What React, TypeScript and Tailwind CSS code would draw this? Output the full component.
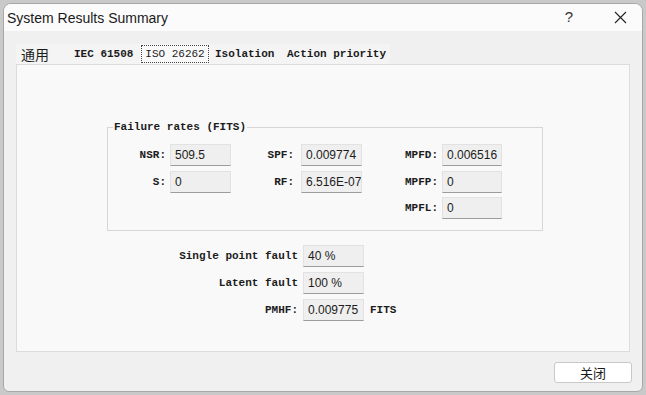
import React from 'react';

const mono = "font-['Liberation_Mono',monospace] text-[11px] font-bold text-[#1c1c1c] whitespace-nowrap";
const valFont = "font-['Liberation_Sans',Arial,sans-serif] text-[12px] text-[#1c1c1c]";

function Field({ value, w = 61 }: { value: string; w?: number }) {
  return (
    <div
      className={`h-[22px] flex items-center pl-[4px] bg-[#efefef] border border-[#e2e2e2] border-b-[#9c9c9c] whitespace-nowrap overflow-hidden ${valFont}`}
      style={{ width: w }}
    >
      {value}
    </div>
  );
}

function Row({ label, labelW, gap, value, w }: { label: string; labelW: number; gap: number; value: string; w?: number }) {
  return (
    <div className="flex items-center">
      <div className={`text-right ${mono}`} style={{ width: labelW, marginRight: gap }}>
        {label}
      </div>
      <Field value={value} w={w} />
    </div>
  );
}

const tabs = [
  { label: '通用', w: 52, pl: 5, cjk: true },
  { label: 'IEC 61508', w: 72, pl: 6 },
  { label: 'ISO 26262', w: 70, pl: 0, active: true },
  { label: 'Isolation', w: 72, pl: 5 },
  { label: 'Action priority', w: 108, pl: 5 },
];

export default function App() {
  return (
    <div className="w-[646px] h-[395px] bg-[#c9c9c9] pl-[3px] pt-[3px] overflow-hidden">
      <div className="w-[640px] h-[389px] bg-[#f0f0f0] rounded-t-[8px] rounded-b-[6px] border border-[#a8a8a8] flex flex-col overflow-hidden">
        {/* Title bar */}
        <div className="h-[27px] bg-[#fbfbfb] flex items-center pl-[3px] shrink-0">
          <span className="font-['Liberation_Sans',Arial,sans-serif] text-[14px] text-[#1a1a1a] leading-none">
            System Results Summary
          </span>
          <span className="ml-auto mr-[41px] font-['Liberation_Sans',Arial,sans-serif] text-[15px] text-[#333]">?</span>
          <svg width="13" height="13" viewBox="0 0 13 13" className="mr-[15px]">
            <path d="M1 1 L12 12 M12 1 L1 12" stroke="#222" strokeWidth="1.1" />
          </svg>
        </div>

        {/* Body */}
        <div className="flex-1 flex flex-col pl-[12px] pr-[12px] pt-[12px]">
          {/* Tabs */}
          <div className="flex h-[21px] items-end">
            {tabs.map((t) => (
              <div
                key={t.label}
                className={`h-[20px] flex items-center ${t.active ? 'bg-[#f9f9f9] justify-center' : 'bg-[#f4f4f4]'}`}
                style={{ width: t.w, paddingLeft: t.pl }}
              >
                {t.active ? (
                  <span className={`border border-dotted border-[#444] px-[3px] leading-[16px] font-normal ${mono}`}>
                    {t.label}
                  </span>
                ) : t.cjk ? (
                  <span className="font-['Noto_Sans_CJK_SC',sans-serif] text-[14px] text-[#1c1c1c] leading-none">{t.label}</span>
                ) : (
                  <span className={mono}>{t.label}</span>
                )}
              </div>
            ))}
          </div>

          {/* Panel */}
          <div className="w-[614px] h-[288px] bg-[#f9f9f9] border border-[#dcdcdc] pt-[62px] pl-[90px]">
            {/* Group box */}
            <div className="relative w-[436px] h-[104px] border border-[#d6d6d6] pt-[16px]">
              <span className={`absolute -top-[8px] left-[5px] px-[1px] bg-[#f9f9f9] leading-[14px] ${mono}`}>
                Failure rates (FITS)
              </span>
              <div className="flex">
                <div className="flex flex-col gap-[5px]">
                  <Row label="NSR:" labelW={58} gap={4} value="509.5" />
                  <Row label="S:" labelW={58} gap={4} value="0" />
                </div>
                <div className="flex flex-col gap-[5px]">
                  <Row label="SPF:" labelW={63} gap={7} value="0.009774" />
                  <Row label="RF:" labelW={63} gap={7} value="6.516E-07" />
                </div>
                <div className="flex flex-col">
                  <Row label="MPFD:" labelW={76} gap={4} value="0.006516" w={60} />
                  <div className="mt-[5px]">
                    <Row label="MPFP:" labelW={76} gap={4} value="0" w={60} />
                  </div>
                  <div className="mt-[4px]">
                    <Row label="MPFL:" labelW={76} gap={4} value="0" w={60} />
                  </div>
                </div>
              </div>
            </div>

            {/* Summary fields */}
            <div className="mt-[14px] ml-[43px] flex flex-col gap-[5px]">
              <Row label="Single point fault" labelW={148} gap={5} value="40 %" />
              <Row label="Latent fault" labelW={148} gap={5} value="100 %" />
              <div className="flex items-center">
                <Row label="PMHF:" labelW={148} gap={5} value="0.009775" />
                <span className={`ml-[6px] ${mono}`}>FITS</span>
              </div>
            </div>
          </div>

          {/* Footer */}
          <div className="flex justify-end mt-[10px]">
            <button className="w-[78px] h-[21px] -mr-[2px] bg-white border border-[#c8c8c8] rounded-[3px] font-['Noto_Sans_CJK_SC',sans-serif] text-[13px] text-[#1a1a1a] leading-none flex items-center justify-center">
              关闭
            </button>
          </div>
        </div>
      </div>
    </div>
  );
}
